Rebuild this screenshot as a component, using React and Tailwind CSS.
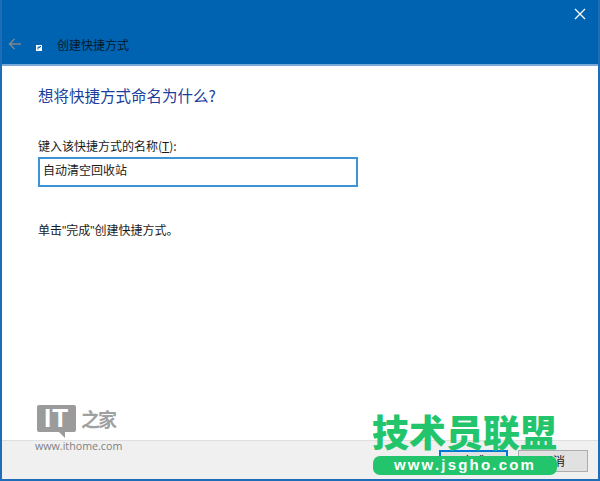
export default function App() {
  const cjk = { fontFamily: '"Noto Sans CJK SC", sans-serif' };
  const latin = { fontFamily: '"Liberation Sans", sans-serif' };
  return (
    <div className="relative w-[600px] h-[481px] flex flex-col bg-white border-x-2 border-b-2 border-[#1d6db8] text-[12px] text-[#1a1a1a] overflow-hidden" style={cjk}>
      <header className="h-[66px] shrink-0 -mx-[2px] bg-[#0063b1] border-b-2 border-[#78a9d8] flex flex-col justify-between">
        <div className="flex justify-end pt-[8px] pr-[14px]">
          <svg width="12" height="12" viewBox="0 0 12 12" stroke="#fff" strokeWidth="1.3"><path d="M1 1l10 10M11 1L1 11" /></svg>
        </div>
        <div className="flex items-center pl-[8px] pb-[10px] h-[30px]">
          <svg width="14" height="12" viewBox="0 0 14 12" fill="none" stroke="#80868c" strokeWidth="1.5"><path d="M13 6H2M6.5 1L1.5 6l5 5" /></svg>
          <div className="ml-[14px] mt-[7px] w-[6px] h-[6px] bg-white flex items-center justify-center">
            <svg width="5" height="5" viewBox="0 0 5 5" fill="none" stroke="#0b5fa8" strokeWidth="1"><path d="M1 4.5V2h2.5M2 3l2-2" /></svg>
          </div>
          <span className="ml-[15px] mt-[2px] text-[12px] leading-[16px] text-[#04182c]">创建快捷方式</span>
        </div>
      </header>
      <main className="flex-1 pl-[36px] flex flex-col">
        <h1 className="mt-[19px] text-[15.5px] leading-[20px] text-[#1c3f9c] font-normal">想将快捷方式命名为什么?</h1>
        <label className="mt-[33px] leading-[16px]">键入该快捷方式的名称(<span className="underline">T</span>):</label>
        <div className="mt-[3px] w-[320px] h-[30px] border-2 border-[#3d93d8] pl-[3px] pt-[3px] leading-[16px]">自动清空回收站</div>
        <p className="mt-[35px] leading-[16px]">单击<span style={latin}>"</span>完成<span style={latin}>"</span>创建快捷方式。</p>
      </main>
      <footer className="h-[39px] shrink-0 bg-[#f0f0f0] border-t border-[#dfdfdf] flex justify-end items-start pt-[9px] pr-[10px] gap-[10px]">
        <button className="w-[69px] h-[22px] bg-[#e1e1e1] border-2 border-[#0078d7] leading-[16px]">完成</button>
        <button className="w-[70px] h-[22px] bg-[#e1e1e1] border border-[#adadad] leading-[18px]">取消</button>
      </footer>

      <div className="absolute left-[35px] top-[405px] flex items-start">
        <div className="relative w-[39px] h-[27px] rounded-[2px] bg-[#9b9b9b] flex items-center justify-center text-white text-[26px] leading-[27px] font-bold tracking-[1px]" style={latin}>
          IT
          <div className="absolute left-[22px] top-[27px] w-0 h-0 border-t-[6px] border-t-[#9b9b9b] border-l-[6px] border-l-transparent" />
        </div>
        <span className="ml-[5px] text-[#a0a0a0] text-[19px] leading-[28px] font-bold tracking-[-2px]">之家</span>
      </div>
      <div className="absolute left-[33px] top-[438px] text-[10.7px] leading-[16px] text-[#808080]" style={{ fontFamily: '"Open Sans", sans-serif' }}>www.ithome.com</div>

      <div className="absolute left-[370px] top-[412px] w-[190px] text-[37px] leading-[38px] font-black text-[#22c56b] whitespace-nowrap">技术员联盟</div>
      <div className="absolute left-[371px] top-[456px] w-[184px] h-[19px] rounded-[7px] bg-[#22c56b] text-white text-center text-[15px] leading-[18px] font-bold tracking-[2.2px]" style={latin}>www.jsgho.com</div>
    </div>
  );
}
